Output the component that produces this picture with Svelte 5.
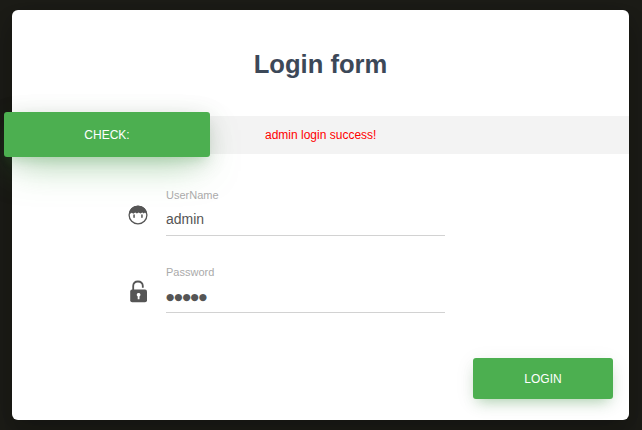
<script>
  let username = $state('admin');
  let password = $state('●●●●●');
</script>

<div class="page">
  <form class="card" onsubmit={(e) => e.preventDefault()}>
    <h2>Login form</h2>

    <div class="status">
      <div class="check">CHECK:</div>
      <p>admin login success!</p>
    </div>

    <div class="field">
      <svg viewBox="0 0 20 20" width="20" height="20" fill="#555" aria-hidden="true">
        <circle cx="10" cy="10" r="8.9" fill="none" stroke="#555" stroke-width="1.3" />
        <path d="M1 9.5C1.3 4 5.2.7 10 .7S18.7 4 19 9.5L17 7.6 15.8 8.6 14.3 7.4 12.5 8.4 10.6 7.4 8.9 8.5 7.2 7.4 5.3 8.8 3.8 7.8Z" />
        <rect x="5.3" y="9.3" width="1.5" height="3.6" rx=".7" />
        <rect x="13.2" y="9.3" width="1.5" height="3.6" rx=".7" />
      </svg>
      <label>
        <span>UserName</span>
        <input type="text" bind:value={username} />
      </label>
    </div>

    <div class="field second">
      <svg class="lock" viewBox="0 0 20 24" width="20" height="24" aria-hidden="true">
        <path d="M5.2 12V7C5.2 4.1 6.9 2.5 9.9 2.5S14.8 4.1 14.8 7V8.7" fill="none" stroke="#555" stroke-width="1.8" />
        <rect x="2.2" y="10.4" width="16.8" height="12.9" rx="2" fill="#555" />
        <path d="M10.6 14a1.8 1.8 0 0 1 .9 3.4v2.8H9.7v-2.8a1.8 1.8 0 0 1 .9-3.4Z" fill="#fff" />
      </svg>
      <label>
        <span>Password</span>
        <input class="masked" type="text" autocomplete="off" bind:value={password} />
      </label>
    </div>

    <div class="actions">
      <button type="submit">LOGIN</button>
    </div>
  </form>
</div>

<style>
  :global(body) {
    margin: 0;
    background: #1c1c17;
  }

  .page {
    box-sizing: border-box;
    width: 642px;
    height: 430px;
    padding: 10px 13px 10px 12px;
    overflow: hidden;
    font-family: "Liberation Sans", Arial, sans-serif;
  }

  .card {
    box-sizing: border-box;
    height: 410px;
    display: flex;
    flex-direction: column;
    background: #fff;
    border-radius: 6px;
    box-shadow: 0 16px 24px 2px rgba(0, 0, 0, 0.14), 0 6px 30px 5px rgba(0, 0, 0, 0.12);
  }

  h2 {
    margin: 38px 0 0;
    height: 68px;
    font-size: 25.6px;
    line-height: 32px;
    text-align: center;
    color: #3c4858;
  }

  .status {
    display: flex;
    align-items: center;
    height: 38px;
    background: #f3f3f3;
  }

  .check {
    width: 206px;
    height: 45px;
    margin: 0 0 1px -8px;
    line-height: 46px;
    text-align: center;
    font-size: 12px;
    color: #fff;
    background: #4caf50;
    border-radius: 3px;
    box-shadow: 0 16px 38px -12px rgba(76, 175, 80, 0.56), 0 4px 25px 0 rgba(0, 0, 0, 0.12), 0 8px 10px -5px rgba(76, 175, 80, 0.2);
  }

  p {
    margin: 0 0 0 55px;
    font-size: 12px;
    line-height: 18px;
    color: #f00;
  }

  .field {
    display: flex;
    margin: 34px 0 0 116px;
    height: 48px;
  }

  .second {
    margin-top: 29px;
  }

  svg {
    flex: none;
    margin: 16.5px 18px 0 0;
  }

  .lock {
    margin-top: 14px;
  }

  label {
    display: flex;
    flex-direction: column;
    width: 279px;
  }

  label span {
    font-size: 11px;
    line-height: 14px;
    color: #aaa;
  }

  input {
    box-sizing: border-box;
    width: 100%;
    height: 34px;
    margin: 0;
    padding: 0;
    border: 0;
    border-bottom: 1px solid #d2d2d2;
    outline: 0;
    background: transparent;
    font: 14px "Liberation Sans", Arial, sans-serif;
    color: #555;
  }

  .masked {
    padding-top: 2px;
    font: 9.5px "DejaVu Sans", sans-serif;
    letter-spacing: -0.1px;
  }

  .actions {
    display: flex;
    justify-content: flex-end;
    margin: 45px 16px 0 0;
  }

  button {
    width: 140px;
    height: 41px;
    padding: 0;
    border: 0;
    border-radius: 3px;
    font: 12px "Liberation Sans", Arial, sans-serif;
    color: #fff;
    background: #4caf50;
    box-shadow: 0 4px 20px 0 rgba(0, 0, 0, 0.08), 0 7px 14px -5px rgba(76, 175, 80, 0.4);
  }
</style>
